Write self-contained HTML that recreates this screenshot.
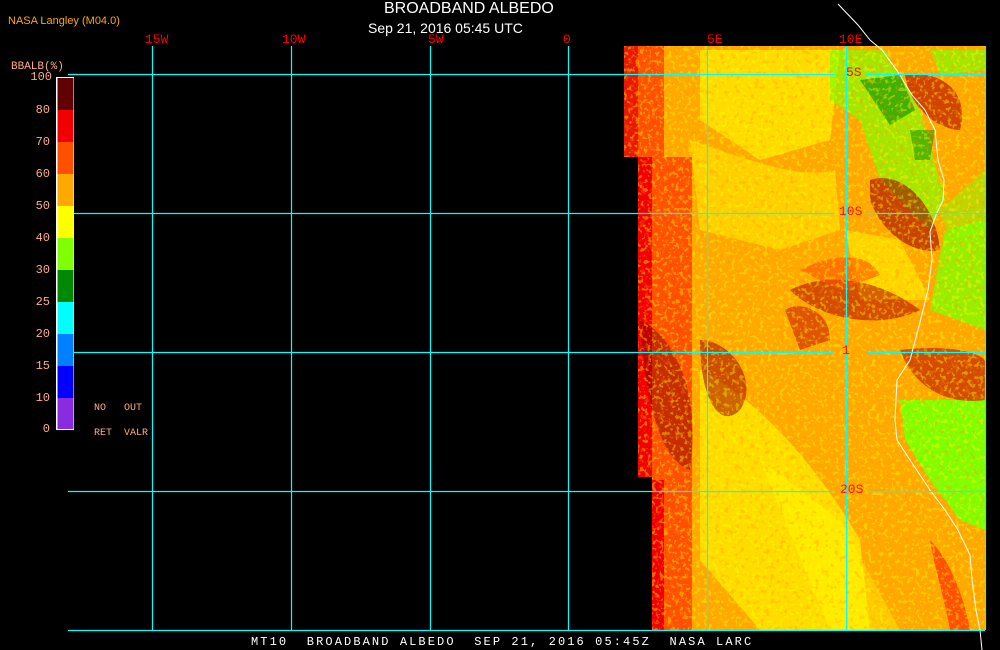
<!DOCTYPE html>
<html><head><style>
html,body{margin:0;padding:0;background:#000;width:1000px;height:650px;overflow:hidden}
body{position:relative;font-family:"Liberation Sans",sans-serif}
.t{position:absolute;white-space:nowrap}
.lab{position:absolute;color:#ffaa88;font-family:"Liberation Mono",monospace;font-size:12px;text-align:right;width:30px;left:20px}
.lon{position:absolute;color:#ff0000;font-family:"Liberation Mono",monospace;font-size:13px;top:32px}
.lat{position:absolute;color:#ff1010;font-family:"Liberation Mono",monospace;font-size:13px;padding:0 2px}
</style></head><body>
<svg width="1000" height="650" style="position:absolute;left:0;top:0">
<defs>
<filter id="n" x="0" y="0" width="100%" height="100%">
<feTurbulence type="fractalNoise" baseFrequency="0.25" numOctaves="2" seed="3"/>
<feColorMatrix type="matrix" values="0 0 0 0 1  0 0 0 0 1  0 0 0 0 0  0 0 0 9 -5"/>
</filter>
<filter id="n2" x="0" y="0" width="100%" height="100%">
<feTurbulence type="fractalNoise" baseFrequency="0.2" numOctaves="2" seed="8"/>
<feColorMatrix type="matrix" values="0 0 0 0 1  0 0 0 0 0.3  0 0 0 0 0  0 0 0 10 -6"/>
</filter>
<clipPath id="img"><polygon points="624,46 985,46 985,630 652,630 652,477 638,477 638,157 624,157"/></clipPath>
</defs>
<g clip-path="url(#img)">
<rect x="600" y="40" width="400" height="600" fill="#ffa800"/>
<rect x="624" y="46" width="40" height="111" fill="#ff5000"/>
<rect x="624" y="46" width="14" height="111" fill="#e00000" opacity="0.7"/>
<rect x="638" y="157" width="14" height="330" fill="#f00000"/>
<rect x="652" y="157" width="40" height="473" fill="#ff5000"/>
<rect x="652" y="480" width="12" height="150" fill="#f00000"/>
<path d="M700,50 L840,50 L830,140 L760,160 L700,120 Z" fill="#ffff00" opacity="0.6"/>
<path d="M690,140 C750,160 800,180 835,170 L840,230 L780,250 L700,230 Z" fill="#ffff00" opacity="0.45"/>
<path d="M700,370 C760,400 820,470 860,540 L870,630 L760,630 L700,560 Z" fill="#ffff00" opacity="0.6"/>
<path d="M760,460 L840,520 L900,630 L830,630 Z" fill="#ffff00" opacity="0.4"/>
<path d="M845,230 L900,240 L930,300 L860,300 Z" fill="#ffff00" opacity="0.5"/>
<path d="M830,50 L885,50 L920,110 L945,200 L930,230 L880,180 L860,120 L830,100 Z" fill="#80ff00" opacity="0.7"/>
<path d="M860,80 L900,75 L915,110 L890,125 Z" fill="#008800" opacity="0.6"/>
<path d="M910,130 L935,130 L930,160 L915,160 Z" fill="#008800" opacity="0.5"/>
<path d="M930,50 L985,50 L985,70 L940,75 Z" fill="#80ff00" opacity="0.7"/>
<path d="M945,230 L985,220 L985,330 L930,310 Z" fill="#80ff00" opacity="0.8"/>
<path d="M900,400 L985,400 L985,530 L960,520 L930,480 L905,440 Z" fill="#80ff00"/>
<path d="M940,210 L985,170 L985,230 L950,240 Z" fill="#80ff00" opacity="0.5"/>
<path d="M870,180 C900,170 935,200 940,250 C920,255 885,240 870,200 Z" fill="#a00000" opacity="0.6"/>
<path d="M905,75 C940,70 970,90 960,130 C940,130 910,110 905,75 Z" fill="#b00000" opacity="0.6"/>
<path d="M790,290 C830,270 880,280 920,310 C880,330 820,320 790,290 Z" fill="#b00000" opacity="0.55"/>
<path d="M900,350 C940,345 975,350 985,360 L985,400 C950,405 915,390 900,350 Z" fill="#b00000" opacity="0.55"/>
<path d="M700,340 C730,340 760,380 740,410 C720,430 700,400 700,340 Z" fill="#a00000" opacity="0.55"/>
<path d="M640,320 C680,340 700,400 690,470 C660,460 645,400 640,320 Z" fill="#800000" opacity="0.45"/>
<path d="M785,310 C800,300 830,310 830,340 L800,350 Z" fill="#c00000" opacity="0.5"/>
<path d="M930,540 C950,560 965,600 970,630 L950,630 C945,600 935,570 930,540 Z" fill="#ff5000"/>
<path d="M800,270 C840,250 870,255 880,275 L840,290 Z" fill="#ff5000" opacity="0.6"/>
<rect x="624" y="46" width="361" height="584" filter="url(#n)" opacity="0.4"/>
<rect x="624" y="46" width="361" height="584" filter="url(#n2)" opacity="0.3"/>
</g>
<polyline fill="none" stroke="#fff" stroke-width="1" points="838,4 858,25 870,40 882,50 898,72 912,95 925,110 935,130 938,160 944,180 943,200 936,215 930,232 932,260 928,290 918,330 910,360 897,380 895,420 897,440 910,460 930,490 945,510 958,530 970,555 972,580 976,610 980,630 982,650"/>
<g stroke="#00ffff" stroke-width="1.2" fill="none">
<line x1="68" y1="74.5" x2="835" y2="74.5"/><line x1="866" y1="74.5" x2="985" y2="74.5"/>
<line x1="68" y1="213.5" x2="834" y2="213.5"/><line x1="864" y1="213.5" x2="985" y2="213.5"/>
<line x1="68" y1="352.5" x2="833" y2="352.5"/><line x1="867" y1="352.5" x2="985" y2="352.5"/>
<line x1="68" y1="491.5" x2="833" y2="491.5"/><line x1="867" y1="491.5" x2="985" y2="491.5"/>
<line x1="68" y1="630.5" x2="985" y2="630.5"/>
<line x1="152.5" y1="46" x2="152.5" y2="630"/>
<line x1="291.5" y1="46" x2="291.5" y2="630"/>
<line x1="430.5" y1="46" x2="430.5" y2="630"/>
<line x1="568.5" y1="46" x2="568.5" y2="630"/>
<line x1="707.5" y1="46" x2="707.5" y2="630"/>
<line x1="846.5" y1="46" x2="846.5" y2="630"/>
<line x1="985.5" y1="46" x2="985.5" y2="630"/>
</g>
<rect x="56" y="77" width="18" height="353" fill="#fff"/>
<rect x="57.5" y="78" width="16" height="32" fill="#600000"/>
<rect x="57.5" y="110" width="16" height="32" fill="#f00000"/>
<rect x="57.5" y="142" width="16" height="32" fill="#ff5000"/>
<rect x="57.5" y="174" width="16" height="32" fill="#ffa800"/>
<rect x="57.5" y="206" width="16" height="32" fill="#ffff00"/>
<rect x="57.5" y="238" width="16" height="32" fill="#80ff00"/>
<rect x="57.5" y="270" width="16" height="32" fill="#008800"/>
<rect x="57.5" y="302" width="16" height="32" fill="#00ffff"/>
<rect x="57.5" y="334" width="16" height="32" fill="#0080ff"/>
<rect x="57.5" y="366" width="16" height="32" fill="#0000ff"/>
<rect x="57.5" y="398" width="16" height="31" fill="#8a2be2"/>
</svg>
<div class="t" style="left:8px;top:15px;color:#ffa800;font-size:11px">NASA Langley (M04.0)</div>
<div class="t" style="left:384px;top:0px;color:#fff;font-size:16px">BROADBAND ALBEDO</div>
<div class="t" style="left:368px;top:20px;color:#fff;font-size:14px">Sep 21, 2016 05:45 UTC</div>
<div class="t" style="left:11px;top:61px;color:#ffaa88;font-size:11px;font-family:'Liberation Mono',monospace">BBALB(%)</div>
<div class="lab" style="top:70px;left:22px">100</div>
<div class="lab" style="top:103px">80</div>
<div class="lab" style="top:135px">70</div>
<div class="lab" style="top:167px">60</div>
<div class="lab" style="top:199px">50</div>
<div class="lab" style="top:231px">40</div>
<div class="lab" style="top:263px">30</div>
<div class="lab" style="top:295px">25</div>
<div class="lab" style="top:327px">20</div>
<div class="lab" style="top:359px">15</div>
<div class="lab" style="top:391px">10</div>
<div class="lab" style="top:422px">0</div>
<div class="t" style="left:94px;top:403px;color:#ffaa88;font-size:10px;font-family:'Liberation Mono',monospace">NO&nbsp;&nbsp;&nbsp;OUT</div>
<div class="t" style="left:94px;top:428px;color:#ffaa88;font-size:10px;font-family:'Liberation Mono',monospace">RET&nbsp;&nbsp;VALR</div>
<div class="lon" style="left:145px">15W</div>
<div class="lon" style="left:282px">10W</div>
<div class="lon" style="left:428px">5W</div>
<div class="lon" style="left:563px">0</div>
<div class="lon" style="left:707px">5E</div>
<div class="lon" style="left:839px">10E</div>
<div class="lat" style="left:844px;top:65px">5S</div>
<div class="lat" style="left:837px;top:204px">10S</div>
<div class="lat" style="left:840px;top:343px">1</div>
<div class="lat" style="left:838px;top:482px">20S</div>
<div class="t" style="left:251px;top:635px;color:#fff;font-size:12px;font-family:'Liberation Mono',monospace;letter-spacing:2.1px">MT10&nbsp;&nbsp;BROADBAND ALBEDO&nbsp;&nbsp;SEP 21, 2016 05:45Z&nbsp;&nbsp;NASA LARC</div>
</body></html>
